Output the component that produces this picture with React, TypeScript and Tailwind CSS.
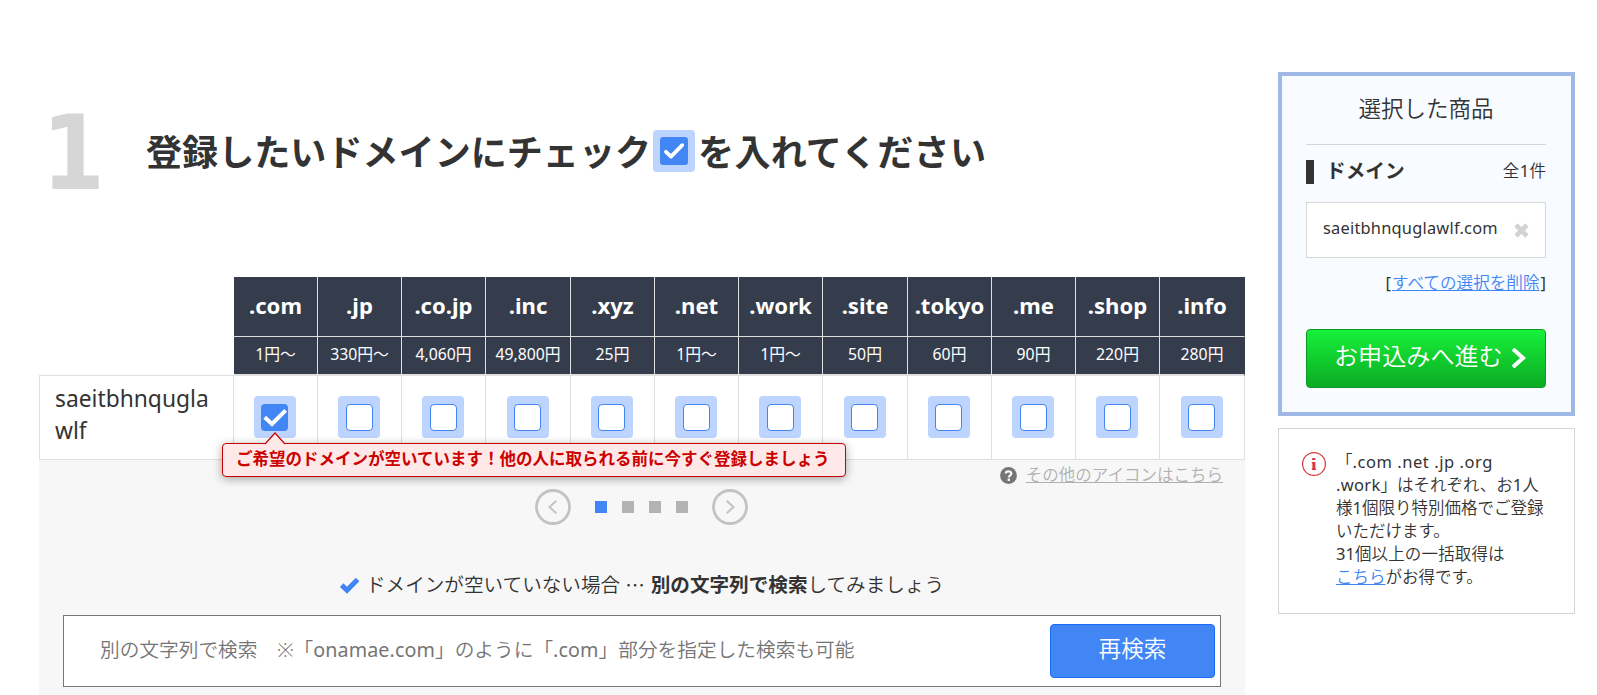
const domains = [
    { tld: '.com', price: '1円～', checked: true },
    { tld: '.jp', price: '330円～' },
    { tld: '.co.jp', price: '4,060円' },
    { tld: '.inc', price: '49,800円' },
    { tld: '.xyz', price: '25円' },
    { tld: '.net', price: '1円～' },
    { tld: '.work', price: '1円～' },
    { tld: '.site', price: '50円' },
    { tld: '.tokyo', price: '60円' },
    { tld: '.me', price: '90円' },
    { tld: '.shop', price: '220円' },
    { tld: '.info', price: '280円' },
];

function CheckBox({ checked, nudge }: { checked?: boolean; nudge?: boolean }) {
    return (
        <span className="flex h-[42px] w-[42px] items-center justify-center rounded-[4px] bg-[#bdd4ff]">
            {checked ? (
                <svg className="mt-px mr-px h-[27px] w-[27px]" viewBox="0 0 27 27">
                    <rect width="27" height="27" rx="4" fill="#4285f4" />
                    <path d="M3.7 13.3 L11 20 L24.6 6.3" fill="none" stroke="#fff" strokeWidth="4" />
                </svg>
            ) : (
                <span className={`mt-px h-[27px] w-[27px] rounded-[4px] border border-[#4285f4] bg-white ${nudge ? 'ml-px' : 'mr-px'}`} />
            )}
        </span>
    );
}

function Heading() {
    return (
        <div className="flex h-[277px] items-start">
            <div className="mt-[102px] w-[107px] origin-left scale-x-[0.88] pl-[3px] font-['DejaVu_Sans'] text-[103px] leading-[103px] font-bold text-[#d6d6d6]">1</div>
            <h1 className="mt-[130px] flex h-[42px] items-center text-[36.1px] leading-[42px] font-bold whitespace-nowrap">
                <span className="pt-[2px]">登録したいドメインにチェック</span>
                <span className="mr-[3px] ml-[2px] flex h-[42px] w-[42px] items-center justify-center rounded-[4px] bg-[#bdd4ff]">
                    <svg className="h-[28px] w-[28px]" viewBox="0 0 28 28">
                        <rect width="28" height="28" rx="3" fill="#4285f4" />
                        <path d="M6 14.8 L11 19.6 L22.2 8.2" fill="none" stroke="#fff" strokeWidth="3.8" strokeLinecap="round" strokeLinejoin="round" />
                    </svg>
                </span>
                <span className="pt-[2px] tracking-[0.2px]">を入れてください</span>
            </h1>
        </div>
    );
}

function DomainTable() {
    return (
        <div className="relative">
            <table className="w-[1206px] table-fixed border-separate border-spacing-0">
                <colgroup>
                    <col className="w-[195px]" />
                    {domains.map((d, i) => (
                        <col key={d.tld} className={i % 4 === 3 ? 'w-[85px]' : 'w-[84px]'} />
                    ))}
                </colgroup>
                <thead>
                    <tr>
                        <td />
                        {domains.map((d) => (
                            <th key={d.tld} className="h-[60px] border-r border-b border-[#e0e0e0] bg-[#353d4c] p-0 pb-[3px] text-[22.1px] leading-8 font-bold text-white last:border-r-[#353d4c]">
                                {d.tld}
                            </th>
                        ))}
                    </tr>
                    <tr>
                        <td className="border-b border-[#e0e0e0]" />
                        {domains.map((d) => (
                            <td key={d.tld} className="h-[39px] border-r border-b-2 border-[#e0e0e0] bg-[#353d4c] p-0 pb-[4px] text-center text-[15.8px] leading-6 whitespace-nowrap text-white last:border-r-[#353d4c]">
                                {d.price}
                            </td>
                        ))}
                    </tr>
                </thead>
                <tbody>
                    <tr>
                        <td className="h-[84px] border-r border-b border-l border-[#e0e0e0] bg-white pt-0 pr-0 pb-[5px] pl-[15px] text-[22.8px] leading-8">
                            saeitbhnqugla
                            <br />
                            wlf
                        </td>
                        {domains.map((d, i) => (
                            <td key={d.tld} className="border-r border-b border-[#e0e0e0] bg-white p-0 pr-px pb-[2px]">
                                <div className="flex justify-center">
                                    <CheckBox checked={d.checked} nudge={i % 4 === 1 || i % 4 === 2} />
                                </div>
                            </td>
                        ))}
                    </tr>
                </tbody>
            </table>

            {/* balloon under the checked domain */}
            <div className="absolute top-[166px] left-[183px] h-[34px] w-[624px] rounded-[4px] border border-[#c00] bg-[#ffe8e8] pl-[13px] text-[16.5px] leading-[30px] font-bold whitespace-nowrap text-[#c00] shadow-[0_2px_10px_rgba(0,0,0,0.35)]">
                ご希望のドメインが空いています！他の人に取られる前に今すぐ登録しましょう
                <svg className="absolute -top-[12px] left-[41px] h-[13px] w-[22px]" viewBox="0 0 22 13">
                    <path d="M1 12 L11 1 L21 12 V13 H1 Z" fill="#ffe8e8" />
                    <path d="M1 12 L11 1 L21 12" fill="none" stroke="#c00" strokeWidth="1.2" />
                </svg>
            </div>
        </div>
    );
}

function Pager() {
    return (
        <div className="ml-[496px] flex h-[36px] items-center">
            <svg className="h-[36px] w-[36px]" viewBox="0 0 36 36" fill="none" stroke="#c3c3c3">
                <circle cx="18" cy="18" r="16.5" strokeWidth="2.8" />
                <path d="M21.3 11.8 L14.5 18 L21.3 24.2" strokeWidth="2" />
            </svg>
            <div className="mx-[24px] flex gap-[15px]">
                <span className="h-3 w-3 bg-[#4285f4]" />
                <span className="h-3 w-3 bg-[#b3b3b3]" />
                <span className="h-3 w-3 bg-[#b3b3b3]" />
                <span className="h-3 w-3 bg-[#b3b3b3]" />
            </div>
            <svg className="h-[36px] w-[36px]" viewBox="0 0 36 36" fill="none" stroke="#c3c3c3">
                <circle cx="18" cy="18" r="16.5" strokeWidth="2.8" />
                <path d="M14.7 11.8 L21.5 18 L14.7 24.2" strokeWidth="2" />
            </svg>
        </div>
    );
}

function SearchAgain() {
    return (
        <div className="pt-[46px]">
            <p className="ml-[300px] flex h-[28px] items-center text-[19.6px] leading-[28px] font-[350] whitespace-nowrap">
                <svg className="mr-[6px] h-[18px] w-[21px]" viewBox="0 0 21 18">
                    <path d="M2.6 9.2 L8 14.2 L18.6 3.6" fill="none" stroke="#4285f4" strokeWidth="5" />
                </svg>
                <span>ドメインが空いていない場合</span>
                <span className="mr-[6px] ml-[5px] font-['Noto_Sans_CJK_JP']">…</span>
                <b className="font-bold">別の文字列で検索</b>
                <span>してみましょう</span>
            </p>
            <div className="mt-[16px] ml-[24px] flex h-[72px] w-[1158px] items-center justify-between border border-[#767676] bg-white pr-[5px] pl-[36px]">
                <span className="pb-[3px] text-[19.7px] leading-[28px] font-[350] whitespace-nowrap text-[#757575]">
                    別の文字列で検索　※「<span className="font-normal tracking-[0.1px]">onamae.com</span>」のように「<span className="font-normal tracking-[0.1px]">.com</span>」部分を指定した検索も可能
                </span>
                <button className="h-[54px] w-[165px] rounded-[4px] border border-[#1a6cf5] bg-[#4285f4] pb-1 text-[22.6px] leading-[30px] font-[350] text-white">再検索</button>
            </div>
        </div>
    );
}

function Cart() {
    return (
        <section className="h-[344px] w-[297px] border-4 border-[#a0b8e5] bg-[#f8fbff] pr-[25px] pl-[24px] font-[350]">
            <h2 className="flex h-[69px] items-center justify-center border-b border-[#d6d6d6] pb-[2px] text-[22.5px] leading-[30px]">選択した商品</h2>
            <div className="mt-[15px] flex h-[24px] items-center">
                <span className="mr-[12px] h-[24px] w-[8px] bg-[#333]" />
                <span className="flex-1 pb-[3px] text-[19.7px] leading-[24px] font-bold">ドメイン</span>
                <span className="pb-[3px] text-[16.5px] leading-[24px]">全<span className="px-[0.4px] font-normal">1</span>件</span>
            </div>
            <div className="mt-[18px] flex h-[56px] items-center justify-between border border-[#d6d6d6] bg-white pr-[16px] pl-[16px]">
                <span className="pb-1 text-[16.4px] leading-6 font-normal tracking-[0.22px]">saeitbhnquglawlf.com</span>
                <svg className="h-[15px] w-[15px]" viewBox="0 0 15 15">
                    <path d="M2 2 L13 13 M13 2 L2 13" stroke="#d3d3d3" strokeWidth="4.6" />
                </svg>
            </div>
            <div className="mt-[12px] h-[59px] text-right text-[16.6px] leading-[25px] whitespace-nowrap">
                <span className="font-normal">[</span>
                <a className="mr-px ml-px text-[#4285f4] underline">すべての選択を削除</a>
                <span className="font-normal">]</span>
            </div>
            <button className="flex h-[59px] w-[240px] items-center rounded-[4px] border border-[#0c9a24] bg-linear-to-b from-[#17f13b] to-[#0bab22] pb-[6px] pl-[27px] text-[24.1px] leading-[32px] font-[350] whitespace-nowrap text-white">
                お申込みへ進む
                <svg className="mt-[5px] ml-[8px] h-[20px] w-[15px]" viewBox="0 0 15 20">
                    <path d="M2 1 L12 10 L2 19" fill="none" stroke="#fff" strokeWidth="4" />
                </svg>
            </button>
        </section>
    );
}

function Notice() {
    return (
        <section className="mt-[12px] flex h-[186px] w-[297px] border border-[#d4d4d4] pt-[21px] pl-[23px]">
            <svg className="mt-[2px] mr-[10px] h-[24px] w-[24px] shrink-0" viewBox="0 0 24 24">
                <circle cx="12" cy="12" r="11.4" fill="none" stroke="#d93a3a" strokeWidth="1.2" />
                <path d="M10.2 6 H13.4 V8 H10.2 Z M9.8 10 H13.4 V16.4 H14 V18 H9.8 V16.4 H10.4 V11.5 H9.8 Z" fill="#d93a3a" />
            </svg>
            <p className="text-[16.5px] leading-[23px] font-[350] whitespace-nowrap">
                「<span className="font-normal tracking-[0.55px]">.com .net .jp .org</span>
                <br />
                <span className="font-normal tracking-[0.3px]">.work</span>」はそれぞれ、お<span className="font-normal">1</span>人
                <br />
                様<span className="font-normal">1</span>個限り特別価格でご登録
                <br />
                いただけます。
                <br />
                <span className="font-normal">31</span>
                <span className="tracking-[0.15px]">個以上の一括取得は</span>
                <br />
                <a className="text-[#4285f4] underline">こちら</a>がお得です。
            </p>
        </section>
    );
}

export default function App() {
    return (
        <div className="flex h-[695px] w-[1597px] items-start overflow-hidden bg-white pl-[39px] font-['Noto_Sans','Noto_Sans_CJK_JP',sans-serif] text-[#333]">
            <main className="w-[1206px]">
                <Heading />
                <DomainTable />
                <div className="h-[236px] bg-[#f7f7f7]">
                    <div className="flex h-[29px] items-center justify-end pt-px pr-[22px] text-[16.5px] leading-6 font-[350] text-[#b0b0b0]">
                        <svg className="mt-px mr-[9px] h-[17px] w-[17px]" viewBox="0 0 17 17">
                            <circle cx="8.5" cy="8.5" r="8.4" fill="#757575" />
                            <path d="M5.8 6.6 C5.8 3.6 11.3 3.6 11.3 6.5 C11.3 8.5 8.8 8.2 8.8 10.6" fill="none" stroke="#f7f7f7" strokeWidth="2.2" />
                            <rect x="7.6" y="11.6" width="2.4" height="2.4" fill="#f7f7f7" />
                        </svg>
                        <a className="underline">その他のアイコンはこちら</a>
                    </div>
                    <Pager />
                    <SearchAgain />
                </div>
            </main>
            <aside className="mt-[72px] ml-[33px] w-[297px]">
                <Cart />
                <Notice />
            </aside>
        </div>
    );
}
